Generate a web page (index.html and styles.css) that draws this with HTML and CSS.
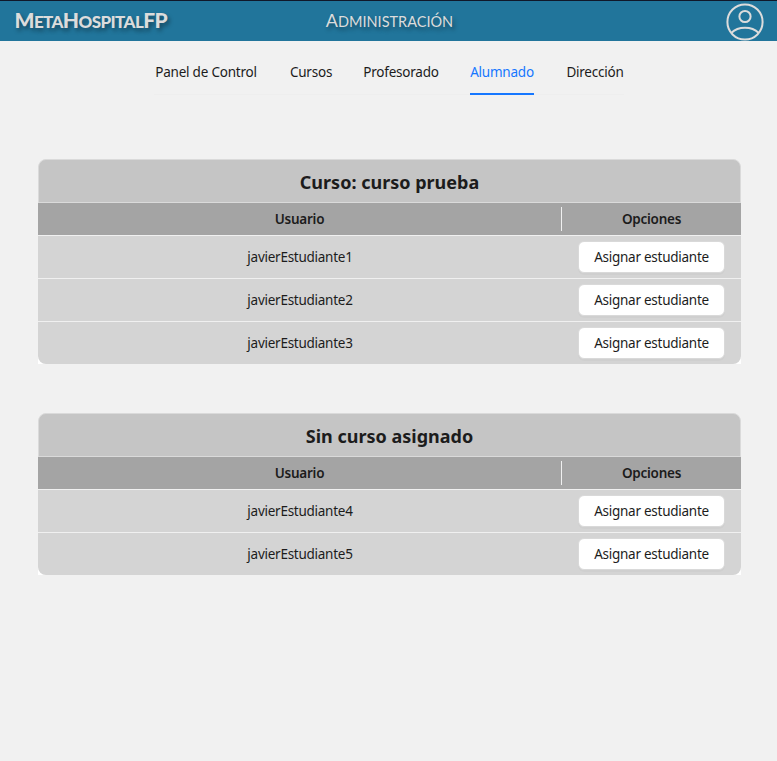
FILE: index.html
```html
<!DOCTYPE html>
<html lang="es">
<head>
<meta charset="utf-8">
<title>MetaHospitalFP</title>
<link rel="stylesheet" href="styles.css">
</head>
<body>
<header class="topbar">
  <div class="brand"><span class="cap">M</span>eta<span class="cap">H</span>ospital<span class="cap">FP</span></div>
  <div class="section"><span class="cap">A</span>dministración</div>
  <svg class="avatar" viewBox="0 0 38 38" fill="none" stroke="#dcdcdc" stroke-width="2">
    <circle cx="19" cy="19" r="17.6"/>
    <circle cx="19" cy="13.5" r="5.6"/>
    <path d="M5.5 29.8C9 26.3 13.500 24.800 19 24.800S29 26.300 32.500 29.800"/>
  </svg>
</header>
<nav class="tabs">
  <a class="tab t1"><span>Panel de Control</span></a>
  <a class="tab t2"><span>Cursos</span></a>
  <a class="tab t3"><span>Profesorado</span></a>
  <a class="tab t4 active"><span>Alumnado</span></a>
  <a class="tab t5"><span>Dirección</span></a>
</nav>
<main>
  <section class="card">
    <h2>Curso: curso prueba</h2>
    <div class="row head"><div class="user">Usuario</div><div class="options">Opciones</div></div>
    <div class="body">
      <div class="row"><div class="user">javierEstudiante1</div><div class="options"><button>Asignar estudiante</button></div></div>
      <div class="row"><div class="user">javierEstudiante2</div><div class="options"><button>Asignar estudiante</button></div></div>
      <div class="row"><div class="user">javierEstudiante3</div><div class="options"><button>Asignar estudiante</button></div></div>
    </div>
  </section>
  <section class="card">
    <h2>Sin curso asignado</h2>
    <div class="row head"><div class="user">Usuario</div><div class="options">Opciones</div></div>
    <div class="body">
      <div class="row"><div class="user">javierEstudiante4</div><div class="options"><button>Asignar estudiante</button></div></div>
      <div class="row"><div class="user">javierEstudiante5</div><div class="options"><button>Asignar estudiante</button></div></div>
    </div>
  </section>
</main>
</body>
</html>
```
FILE: styles.css
```css
* { box-sizing: border-box; }
body {
  margin: 0;
  min-height: 761px;
  background: #f1f1f1;
  color: #1c1c1c;
  font: 13.5px/22px "Noto Sans", "Open Sans", sans-serif;
}
.topbar {
  height: 41px;
  border-top: 1px solid #10182a;
  background: #21759b;
  display: grid;
  grid-template-columns: 200px 1fr 200px;
  align-items: center;
  color: #dcdcdc;
  font-family: Lato, sans-serif;
  font-size: 17px;
  line-height: 24px;
  text-transform: uppercase;
  text-shadow: 2px 3px 4px rgba(0, 0, 0, .4);
  white-space: nowrap;
}
.cap { font-size: 21px; }
.brand { padding-left: 14.5px; font-weight: 900; letter-spacing: -.6px; }
.section { text-align: center; font-size: 14.5px; padding-left: 2px; }
.section .cap { font-size: 18px; }
.avatar { width: 38px; height: 38px; justify-self: end; margin-right: 13px; margin-top: 1px; }
.tabs {
  width: 470px;
  height: 54px;
  margin: 0 auto;
  position: relative;
  left: .5px;
  display: flex;
  gap: 32px;
  border-bottom: 1px solid #eeeeee;
}
.tab {
  height: 54px;
  padding-top: 20px;
  white-space: nowrap;
  display: flex;
  justify-content: center;
  align-items: flex-start;
  letter-spacing: -.22px;
}
.t1 { width: 104px; }
.t2 { width: 42px; }
.t3 { width: 74px; }
.t4 { width: 64px; }
.t5 { width: 58px; }
.active { color: #1677ff; border-bottom: 2px solid #1677ff; }
main { padding: 64px 36px 0 38px; }
.card { margin-bottom: 49px; }
h2 {
  margin: 0;
  height: 44px;
  border: 1px solid #dadada;
  border-radius: 8px 8px 0 0;
  background: #c5c5c5;
  text-align: center;
  font-size: 18px;
  line-height: 44px;
  font-weight: 700;
  letter-spacing: 0;
}
.row {
  display: grid;
  grid-template-columns: 524px 179px;
  align-items: center;
  text-align: center;
  height: 43px;
  background: #d4d4d4;
  border-bottom: 1px solid #f0f0f0;
  letter-spacing: -.26px;
}
.head { height: 33px; background: #a4a4a4; font-weight: 600; }
.head .user { border-right: 1px solid #f0f0f0; height: 24px; line-height: 24px; }
.body { background: #fff; }
.body .row:last-child { height: 42px; border-bottom: 0; border-radius: 0 0 8px 8px; }
button {
  display: block;
  width: 147px;
  height: 32px;
  margin: 0 auto;
  padding: 0;
  border: 1px solid #d9d9d9;
  border-radius: 6px;
  background: #fff;
  box-shadow: 0 2px 0 rgba(0, 0, 0, .02);
  color: #1c1c1c;
  font: inherit;
  letter-spacing: inherit;
}
```
